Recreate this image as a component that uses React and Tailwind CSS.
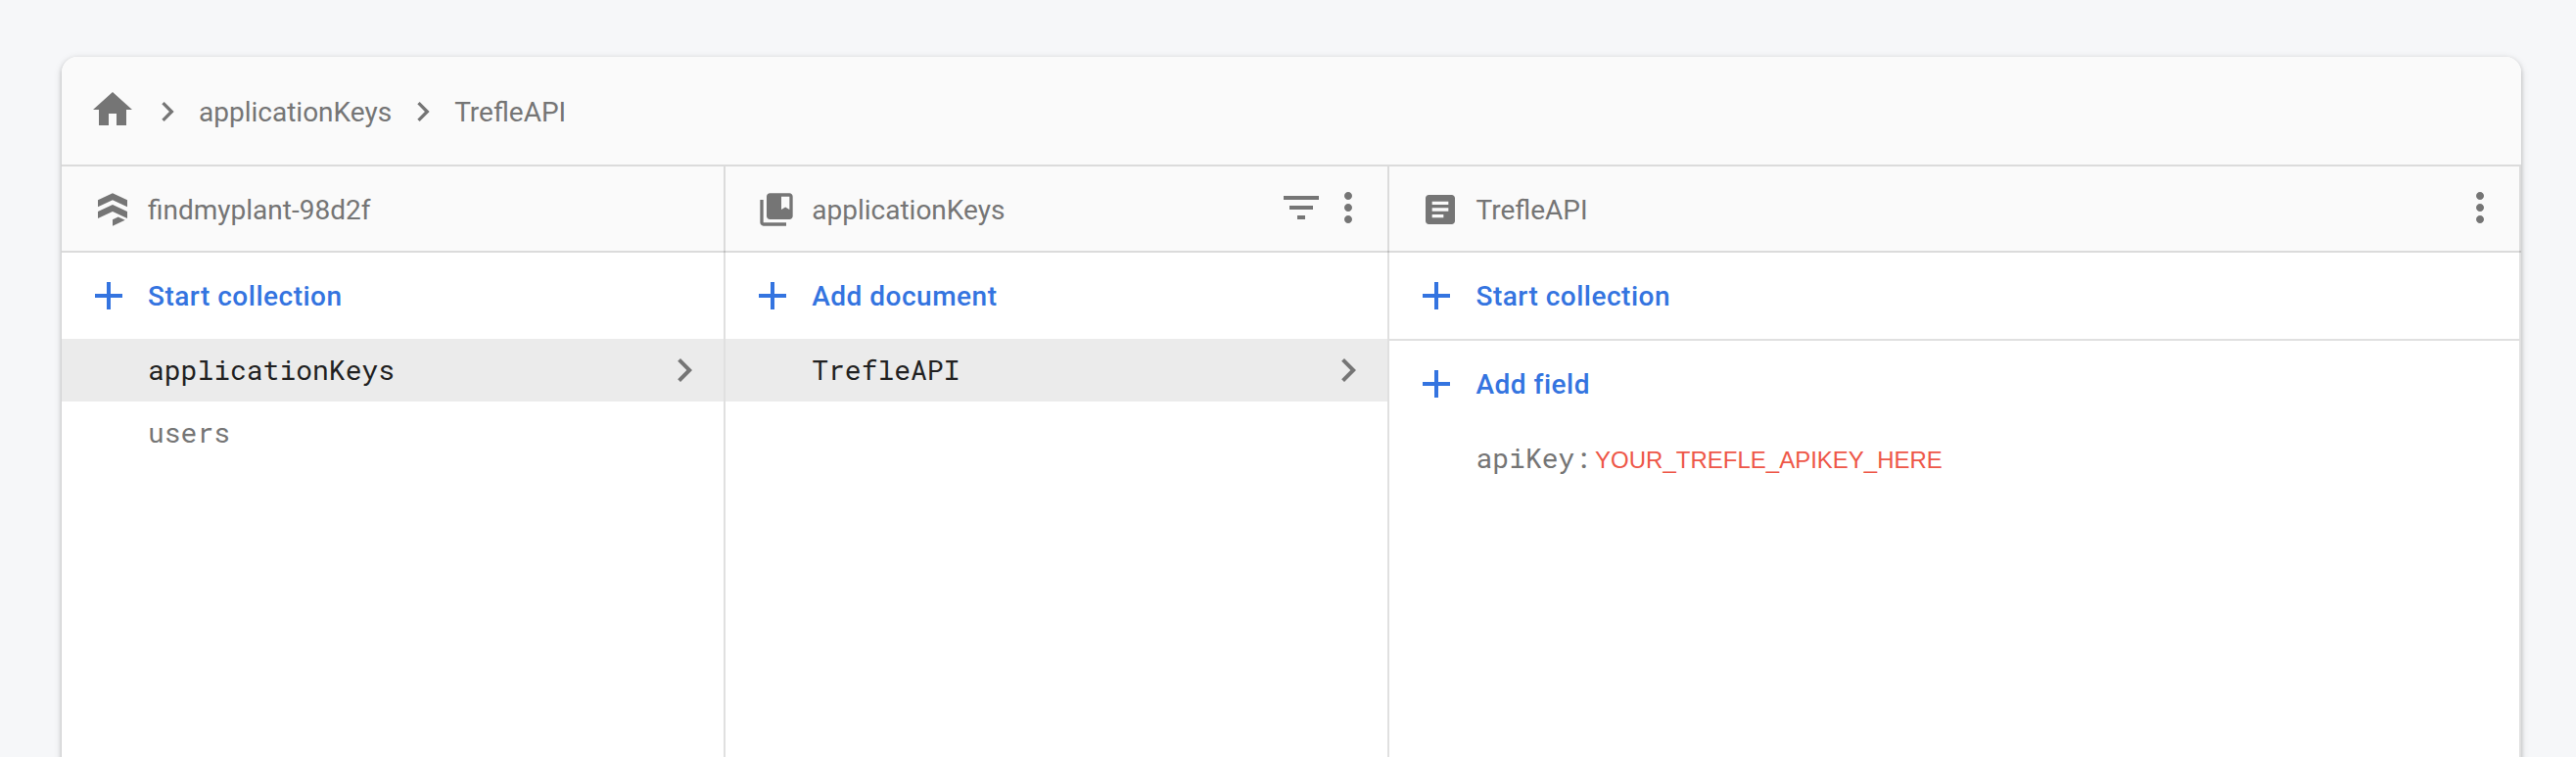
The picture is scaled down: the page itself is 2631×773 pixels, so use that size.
import { MdHome, MdChevronRight, MdAdd, MdFilterList, MdMoreVert, MdCollectionsBookmark, MdArticle } from 'react-icons/md';

function FirestoreIcon() {
  return (
    <svg className="size-10 shrink-0" viewBox="0 0 40 40" fill="currentColor">
      <path d="M20 3.3 5 10.3v7l15-7 15 7v-7z" />
      <path d="M20 15 5 22v7l15-7 15 7v-7z" />
      <path d="M20 30.3v6.4l12.7-6-7-3.2z" />
    </svg>
  );
}

function PanelHeader({ icon, title, children }) {
  return (
    <div className="-mr-0.5 flex h-[88px] items-center border-b-2 border-black/12 bg-black/2 pl-8 pr-[18px] pt-0.5">
      {icon}
      <span className="ml-4 grow translate-y-px">{title}</span>
      <div className="-mt-1 flex">{children}</div>
    </div>
  );
}

function AddButton({ label }) {
  return (
    <button className="flex h-[88px] w-full items-center pl-6 font-medium tracking-[0.5px] text-[#3474e0]">
      <MdAdd className="size-12" />
      <span className="ml-4 translate-y-px">{label}</span>
    </button>
  );
}

const mono = "font-['Roboto_Mono','Liberation_Mono',monospace]";

function Item({ label, active }) {
  return (
    <div className={`flex h-16 items-center justify-between pl-[88px] pr-4 ${mono} ${active ? 'bg-[#ebebeb] text-[#212121]' : ''}`}>
      <span>{label}</span>
      {active && <MdChevronRight className="size-12 text-[#757575]" />}
    </div>
  );
}

export default function App() {
  return (
    <div className="h-[773px] overflow-hidden bg-[#f6f7f9] pl-[63px] pr-14 pt-[58px] font-[Roboto,sans-serif] text-[28px] leading-10 text-[#757575]">
      <div className="flex h-[760px] flex-col overflow-hidden rounded-2xl bg-white shadow-[0_2px_4px_rgba(0,0,0,0.2),0_2px_8px_rgba(0,0,0,0.14)]">
        <nav className="flex h-28 shrink-0 items-center border-b-2 border-black/12 bg-[#fafafa] pl-7 pt-0.5">
          <MdHome className="-mt-1 size-12" />
          <MdChevronRight className="ml-3 size-10" />
          <span className="ml-3 translate-y-px">applicationKeys</span>
          <MdChevronRight className="ml-3 size-10" />
          <span className="ml-3 translate-y-px">TrefleAPI</span>
        </nav>
        <div className="grid grow grid-cols-[678.24px_678.24px_1fr]">
          <section className="border-r-2 border-black/12">
            <PanelHeader icon={<FirestoreIcon />} title="findmyplant-98d2f" />
            <AddButton label="Start collection" />
            <Item label="applicationKeys" active />
            <Item label="users" />
          </section>
          <section className="border-r-2 border-black/12">
            <PanelHeader icon={<MdCollectionsBookmark className="size-10" />} title="applicationKeys">
              <MdFilterList className="size-12" />
              <MdMoreVert className="size-12" />
            </PanelHeader>
            <AddButton label="Add document" />
            <Item label="TrefleAPI" active />
          </section>
          <section className="border-r-2 border-black/12">
            <PanelHeader icon={<MdArticle className="size-10" />} title="TrefleAPI">
              <MdMoreVert className="size-12" />
            </PanelHeader>
            <AddButton label="Start collection" />
            <div className="border-t-2 border-black/12">
              <AddButton label="Add field" />
            </div>
            <div className="flex h-16 items-center pl-[88px]">
              <span className={mono}>apiKey:</span>
              <span className="ml-1 translate-y-0.5 font-['Liberation_Sans',Arial,sans-serif] text-2xl text-[#ee5748]">YOUR_TREFLE_APIKEY_HERE</span>
            </div>
          </section>
        </div>
      </div>
    </div>
  );
}
